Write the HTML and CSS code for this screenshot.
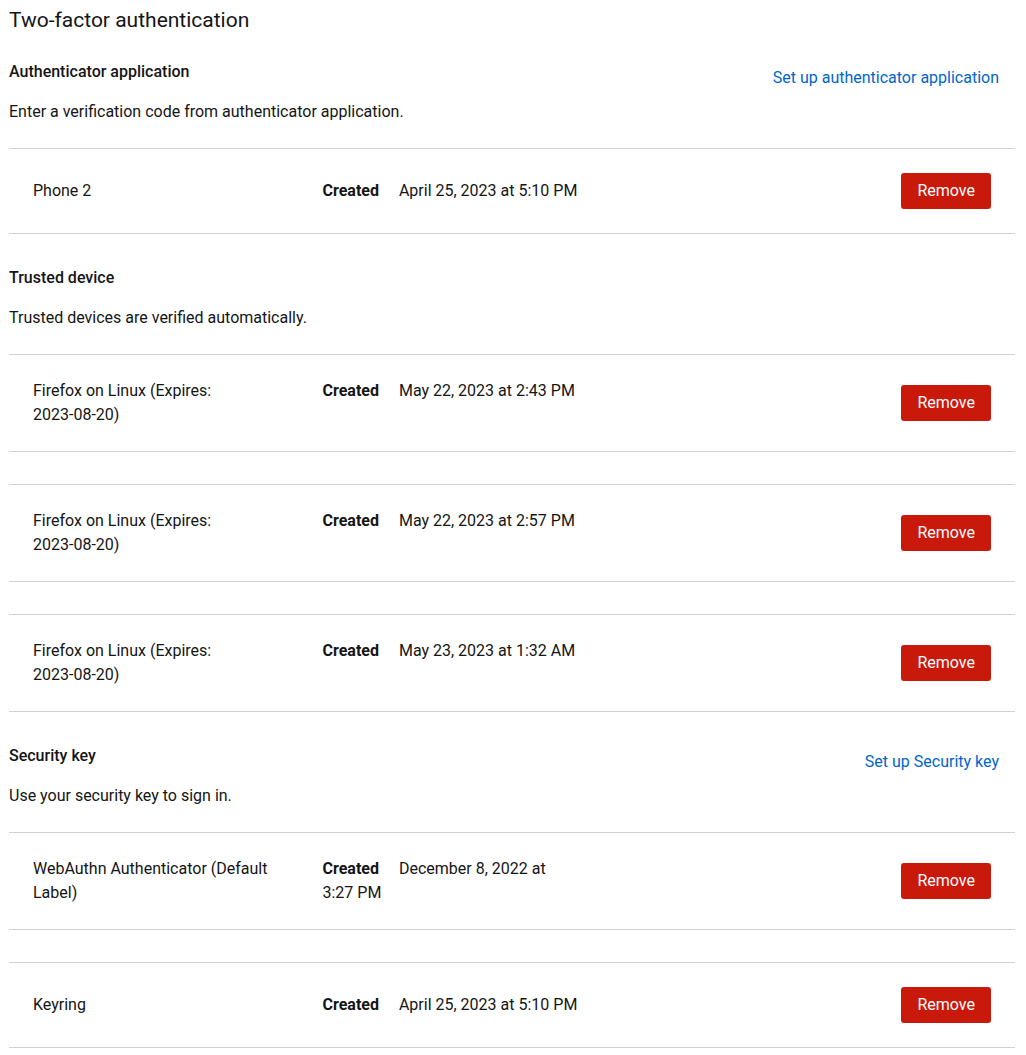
FILE: index.html
```html
<!DOCTYPE html>
<html lang="en">
<head>
<meta charset="utf-8">
<title>Two-factor authentication</title>
<link rel="stylesheet" href="styles.css">
</head>
<body>
<main class="page">
  <h2 class="page-title">Two-factor authentication</h2>

  <section class="section">
    <div class="section-head">
      <h3 class="section-title">Authenticator application</h3>
      <button class="link-btn" type="button">Set up authenticator application</button>
    </div>
    <p class="section-desc">Enter a verification code from authenticator application.</p>
    <ul class="data-list">
      <li class="item">
        <div class="cells">
          <div class="cell">Phone 2</div>
          <div class="cell"><strong class="label">Created</strong> April 25, 2023 at 5:10 PM</div>
          <div class="cell"></div>
        </div>
        <button class="danger-btn" type="button">Remove</button>
      </li>
    </ul>
  </section>

  <section class="section">
    <div class="section-head">
      <h3 class="section-title">Trusted device</h3>
    </div>
    <p class="section-desc">Trusted devices are verified automatically.</p>
    <ul class="data-list">
      <li class="item">
        <div class="cells">
          <div class="cell">Firefox on Linux (Expires: <span class="nobreak">2023-08-20)</span></div>
          <div class="cell"><strong class="label">Created</strong> May 22, 2023 at 2:43 PM</div>
          <div class="cell"></div>
        </div>
        <button class="danger-btn" type="button">Remove</button>
      </li>
    </ul>
    <ul class="data-list">
      <li class="item">
        <div class="cells">
          <div class="cell">Firefox on Linux (Expires: <span class="nobreak">2023-08-20)</span></div>
          <div class="cell"><strong class="label">Created</strong> May 22, 2023 at 2:57 PM</div>
          <div class="cell"></div>
        </div>
        <button class="danger-btn" type="button">Remove</button>
      </li>
    </ul>
    <ul class="data-list">
      <li class="item">
        <div class="cells">
          <div class="cell">Firefox on Linux (Expires: <span class="nobreak">2023-08-20)</span></div>
          <div class="cell"><strong class="label">Created</strong> May 23, 2023 at 1:32 AM</div>
          <div class="cell"></div>
        </div>
        <button class="danger-btn" type="button">Remove</button>
      </li>
    </ul>
  </section>

  <section class="section">
    <div class="section-head">
      <h3 class="section-title">Security key</h3>
      <button class="link-btn" type="button">Set up Security key</button>
    </div>
    <p class="section-desc">Use your security key to sign in.</p>
    <ul class="data-list">
      <li class="item">
        <div class="cells">
          <div class="cell">WebAuthn Authenticator (Default Label)</div>
          <div class="cell"><strong class="label">Created</strong> December 8, 2022 at 3:27 PM</div>
          <div class="cell"></div>
        </div>
        <button class="danger-btn" type="button">Remove</button>
      </li>
    </ul>
    <ul class="data-list">
      <li class="item">
        <div class="cells">
          <div class="cell">Keyring</div>
          <div class="cell"><strong class="label">Created</strong> April 25, 2023 at 5:10 PM</div>
          <div class="cell"></div>
        </div>
        <button class="danger-btn" type="button">Remove</button>
      </li>
    </ul>
  </section>
</main>
</body>
</html>
```

FILE: styles.css
```css
* { box-sizing: border-box; }

html, body {
  margin: 0;
  padding: 0;
  background: #ffffff;
}

body {
  font-family: Roboto, "Liberation Sans", sans-serif;
  font-size: 16px;
  line-height: 24px;
  color: #151515;
}

.page {
  padding: 5px 11px 0 9px;
}

.page-title {
  margin: 0 0 25px;
  font-size: 21px;
  line-height: 30px;
  font-weight: 400;
}

.section-head {
  display: flex;
  justify-content: space-between;
  align-items: flex-start;
  margin-bottom: 16px;
}

.section-title {
  margin: 0;
  font-size: 16px;
  line-height: 24px;
  font-weight: 500;
}

.link-btn {
  margin: 0 0 -12px;
  padding: 6px 16px;
  border: 0;
  background: none;
  font: inherit;
  line-height: 24px;
  color: #0066cc;
  cursor: pointer;
}

.section-desc {
  margin: 0 0 24px;
}

.data-list {
  list-style: none;
  margin: 0 0 32px;
  padding: 0;
  border-top: 1px solid #d2d2d2;
}

.item {
  display: flex;
  align-items: center;
  padding: 24px;
  border-bottom: 1px solid #d2d2d2;
}

.cells {
  flex: 1;
  display: flex;
  align-items: flex-start;
  gap: 32px;
  margin-right: 32px;
}

.cell {
  flex: 1 1 0;
  min-width: 0;
}

.nobreak {
  white-space: nowrap;
}

.label {
  font-weight: 700;
  margin-right: 16px;
}

.danger-btn {
  flex: none;
  padding: 6px 16px;
  border: 0;
  border-radius: 3px;
  background: #c9190b;
  color: #ffffff;
  font: inherit;
  line-height: 24px;
  cursor: pointer;
}
```
